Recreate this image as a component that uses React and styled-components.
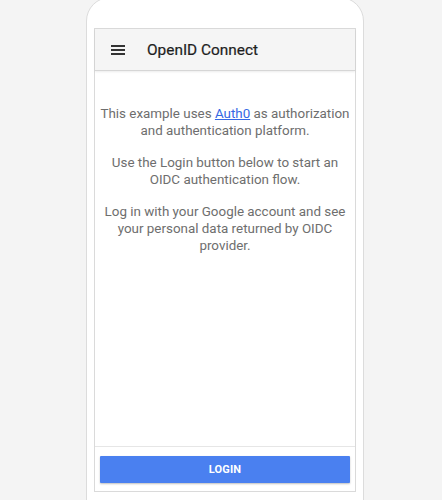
import React from 'react';
import styled, { createGlobalStyle } from 'styled-components';

const GlobalStyle = createGlobalStyle`
  html, body {
    margin: 0;
    padding: 0;
    background: #f4f4f4;
    font-family: Roboto, "Liberation Sans", Arial, sans-serif;
    overflow: hidden;
  }
`;

const Page = styled.div`
  height: 500px;
  overflow: hidden;
`;

const Phone = styled.div`
  margin: -3px 0 0 86px;
  width: 262px;
  height: 520px;
  padding: 30px 7px 0;
  background: #ffffff;
  border: 1px solid #dcdcdc;
  border-radius: 24px 24px 0 0;
`;

const Screen = styled.div`
  height: 462px;
  border: 1px solid #dadada;
  display: flex;
  flex-direction: column;
  background: #ffffff;
`;

const Header = styled.div`
  height: 41px;
  flex-shrink: 0;
  display: flex;
  align-items: center;
  padding-left: 16px;
  background: #f5f5f5;
  border-bottom: 1px solid #d6d6d6;
  box-shadow: 0 1px 2px rgba(0, 0, 0, 0.08);
`;

const MenuIcon = styled.svg`
  width: 14px;
  height: 10px;
  margin-right: 22px;
  fill: #333;
`;

const Title = styled.div`
  font-size: 15.4px;
  font-weight: 400;
  color: #1e1e1e;
  -webkit-text-stroke: 0.2px #1e1e1e;
`;

const Content = styled.div`
  flex: 1;
  padding: 34px 1px 0;
  text-align: center;
  color: #6e6e6e;
  font-size: 13.4px;
  line-height: 17px;
`;

const Para = styled.p`
  margin: 0 0 15px;
`;

const Link = styled.a`
  color: #3468e4;
  text-decoration: underline;
`;

const Footer = styled.div`
  flex-shrink: 0;
  border-top: 1px solid #e6e6e6;
  padding: 9px 5px 8px;
`;

const LoginButton = styled.button`
  width: 100%;
  height: 27px;
  border: none;
  border-radius: 1px;
  background: #4a80f0;
  color: #ffffff;
  font-family: Roboto, "Liberation Sans", Arial, sans-serif;
  font-size: 11px;
  font-weight: 700;
  letter-spacing: 0.2px;
  text-transform: uppercase;
  box-shadow: 0 1px 2px rgba(0, 0, 0, 0.25);
`;

export default function App() {
  return (
    <Page>
      <GlobalStyle />
      <Phone>
        <Screen>
          <Header>
            <MenuIcon viewBox="0 0 14 10">
              <rect x="0" y="0" width="14" height="2" />
              <rect x="0" y="4" width="14" height="2" />
              <rect x="0" y="8" width="14" height="2" />
            </MenuIcon>
            <Title>OpenID Connect</Title>
          </Header>
          <Content>
            <Para>
              This example uses <Link href="#">Auth0</Link> as authorization and authentication platform.
            </Para>
            <Para>Use the Login button below to start an OIDC authentication flow.</Para>
            <Para>Log in with your Google account and see your personal data returned by OIDC provider.</Para>
          </Content>
          <Footer>
            <LoginButton>Login</LoginButton>
          </Footer>
        </Screen>
      </Phone>
    </Page>
  );
}
